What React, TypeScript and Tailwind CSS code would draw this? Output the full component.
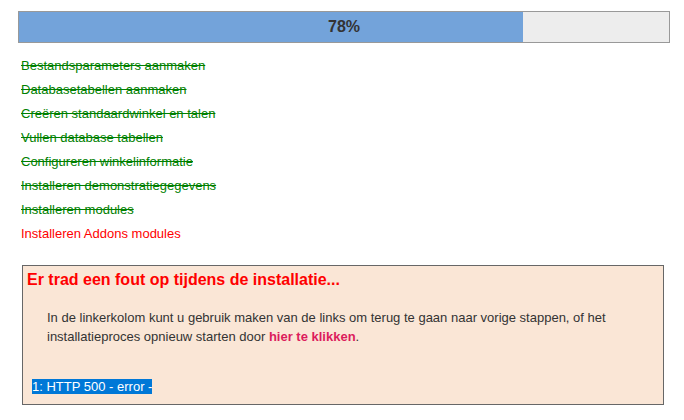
const STEPS = [
  'Bestandsparameters aanmaken',
  'Databasetabellen aanmaken',
  'Creëren standaardwinkel en talen',
  'Vullen database tabellen',
  'Configureren winkelinformatie',
  'Installeren demonstratiegegevens',
  'Installeren modules',
];

const CURRENT_STEP = 'Installeren Addons modules';
const PROGRESS = 78;

export default function App() {
  return (
    <div className="min-h-[420px] w-[684px] bg-white pl-[18px] pt-[11px] font-['Liberation_Sans',Arial,sans-serif]">
      {/* progress bar */}
      <div className="relative h-[32px] w-[652px] border border-[#999999] bg-[#ededed]">
        <div className="h-full bg-[#73a3da]" style={{ width: `calc(${PROGRESS}% - 3px)` }} />
        <span className="absolute inset-0 flex items-center justify-center text-[16px] font-bold text-[#333333]">
          {PROGRESS}%
        </span>
      </div>

      {/* steps */}
      <ul className="ml-[3px] mt-[11px] text-[13px] leading-[24px]">
        {STEPS.map((step) => (
          <li key={step} className="text-[#008000] line-through decoration-[#008000]">
            {step}
          </li>
        ))}
        <li className="text-[#ff0000]">{CURRENT_STEP}</li>
      </ul>

      {/* error box */}
      <div className="ml-[4px] mt-[19px] w-[642px] border border-[#676767] bg-[#fae6d6] pb-[8px] pl-[4px] pr-[24px] pt-[4px]">
        <h2 className="text-[16px] font-bold leading-[20px] text-[#ff0000]">
          Er trad een fout op tijdens de installatie...
        </h2>
        <p className="mt-[18px] pl-[20px] text-[13px] leading-[19px] text-[#333333]">
          In de linkerkolom kunt u gebruik maken van de links om terug te gaan naar vorige stappen, of het
          installatieproces opnieuw starten door{' '}
          <a href="#" className="font-bold text-[#dc1c5c]">
            hier te klikken
          </a>
          .
        </p>
        <div className="mt-[31px] pl-[5px] text-[13px] leading-[19px]">
          <span className="bg-[#0078d7] text-white">1: HTTP 500 - error -</span>
        </div>
      </div>
    </div>
  );
}
